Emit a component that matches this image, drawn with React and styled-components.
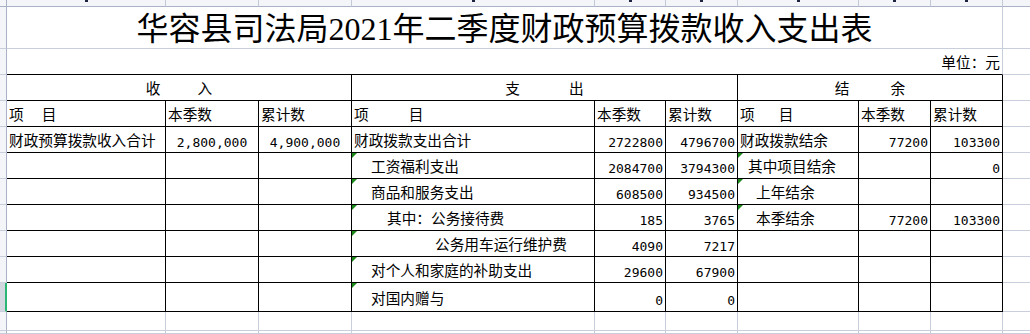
import React from 'react';
import styled, { createGlobalStyle } from 'styled-components';

const GRID = '#c8cedb';
const HEAD_LINE = '#aab2c6';
const HEAD_BG = '#f3f5f8';
const INK = '#000';

const GlobalStyle = createGlobalStyle`
  html, body { margin: 0; padding: 0; background: #fff; }
  body { font-family: "Noto Sans CJK SC", sans-serif; overflow: hidden; }
  * { box-sizing: border-box; }
`;

const Sheet = styled.div`
  display: grid;
  width: 1030px;
  height: 334px;
  overflow: hidden;
  grid-template-columns: 7px 159px 93px 93px 243px 71px 72px 121px 72px 72px 1fr;
  grid-template-rows: 7px 42px 26px 26px 26px repeat(6, 26px) 29px 19px 1fr;
  background: #fff;
`;

const Corner = styled.div`
  background: ${HEAD_BG};
  border-right: 1px solid ${HEAD_LINE};
  border-bottom: 1px solid ${HEAD_LINE};
`;

const ColHead = styled.div`
  background: ${HEAD_BG};
  border-right: ${p => (p.$last ? 'none' : `1px solid #c3c9d6`)};
  border-bottom: 1px solid ${HEAD_LINE};
  display: flex;
  justify-content: center;
  align-items: flex-start;
  overflow: hidden;
`;

const Tick = styled.span`
  display: block;
  width: 3px;
  height: 2px;
  background: #1c2440;
`;

const RowHead = styled.div`
  background: ${p => (p.$selected ? '#d3d7e0' : HEAD_BG)};
  border-right: ${p => (p.$selected ? '2px solid #2bb673' : `1px solid ${HEAD_LINE}`)};
  border-bottom: 1px solid ${GRID};
`;

const TitleCell = styled.div`
  grid-column: span 9;
  border-right: 1px solid ${GRID};
  border-bottom: 1px solid ${GRID};
  display: flex;
  align-items: center;
  justify-content: center;
  padding-top: 3px;
  font-family: "Liberation Serif", "Noto Sans CJK SC", serif;
  font-size: 32px;
  line-height: 1;
  color: ${INK};
  white-space: nowrap;
`;

const UnitCell = styled.div`
  grid-column: span 9;
  border-right: 1px solid ${GRID};
  border-bottom: 1px solid ${INK};
  display: flex;
  align-items: center;
  justify-content: flex-end;
  padding: 2px 2px 0 0;
  font-size: 14.67px;
  line-height: 1;
  color: ${INK};
`;

const Blank = styled.div`
  border-right: ${p => (p.$open ? 'none' : `1px solid ${GRID}`)};
  border-bottom: 1px solid ${GRID};
`;

const Cell = styled.div`
  position: relative;
  grid-column: span ${p => p.$span || 1};
  border-right: 1px solid ${INK};
  border-bottom: 1px solid ${INK};
  display: flex;
  align-items: center;
  justify-content: ${p =>
    p.$align === 'right' ? 'flex-end' : p.$align === 'center' ? 'center' : 'flex-start'};
  padding: ${p => (p.$num ? 6 : 2)}px 2px 0 ${p => 2 + (p.$indent || 0)}px;
  font-family: ${p =>
    p.$num ? '"DejaVu Sans Mono", monospace' : '"Noto Sans CJK SC", sans-serif'};
  font-size: ${p => (p.$num ? '13px' : '14.67px')};
  line-height: 1;
  color: ${INK};
  white-space: nowrap;
  overflow: hidden;
`;

const Flag = styled.span`
  position: absolute;
  top: 0;
  left: 0;
  width: 0;
  height: 0;
  border-top: 5px solid #1b8a1b;
  border-right: 5px solid transparent;
`;

const Spaced = styled.span`
  display: inline-flex;
  gap: ${p => p.$gap}px;
`;

const tickCols = [true, false, false, true, true, true, true, true, true];

const rows = [
  {
    inc: ['财政预算拨款收入合计', '2,800,000', '4,900,000'],
    exp: { name: '财政拨款支出合计', indent: 0, q: '2722800', t: '4796700' },
    bal: { name: '财政拨款结余', indent: 0, q: '77200', t: '103300' },
  },
  {
    exp: { name: '工资福利支出', indent: 17, q: '2084700', t: '3794300', flag: true },
    bal: { name: '其中项目结余', indent: 8, q: '', t: '0', flag: true },
  },
  {
    exp: { name: '商品和服务支出', indent: 17, q: '608500', t: '934500', flag: true },
    bal: { name: '上年结余', indent: 16, q: '', t: '', flag: true },
  },
  {
    exp: { name: '其中：公务接待费', indent: 33, q: '185', t: '3765', flag: true },
    bal: { name: '本季结余', indent: 16, q: '77200', t: '103300', flag: true },
  },
  {
    exp: { name: '公务用车运行维护费', indent: 81, q: '4090', t: '7217', flag: true },
  },
  {
    exp: { name: '对个人和家庭的补助支出', indent: 17, q: '29600', t: '67900', flag: true },
  },
  {
    exp: { name: '对国内赠与', indent: 17, q: '0', t: '0', flag: true },
  },
];

const Pair = ({ a, b, gap }) => (
  <Spaced $gap={gap}>
    <span>{a}</span>
    <span>{b}</span>
  </Spaced>
);

export default function App() {
  return (
    <>
      <GlobalStyle />
      <Sheet>
        <Corner />
        {tickCols.map((t, i) => (
          <ColHead key={i}>{t && <Tick />}</ColHead>
        ))}
        <ColHead $last />

        <RowHead />
        <TitleCell>华容县司法局2021年二季度财政预算拨款收入支出表</TitleCell>
        <Blank $open />

        <RowHead />
        <UnitCell>单位：元</UnitCell>
        <Blank $open />

        <RowHead />
        <Cell $span={3} $align="center">
          <Pair a="收" b="入" gap={37} />
        </Cell>
        <Cell $span={3} $align="center">
          <Pair a="支" b="出" gap={49} />
        </Cell>
        <Cell $span={3} $align="center">
          <Pair a="结" b="余" gap={41} />
        </Cell>
        <Blank $open />

        <RowHead />
        <Cell><Pair a="项" b="目" gap={18} /></Cell>
        <Cell>本季数</Cell>
        <Cell>累计数</Cell>
        <Cell><Pair a="项" b="目" gap={40} /></Cell>
        <Cell>本季数</Cell>
        <Cell>累计数</Cell>
        <Cell><Pair a="项" b="目" gap={24} /></Cell>
        <Cell>本季数</Cell>
        <Cell>累计数</Cell>
        <Blank $open />

        {rows.map((r, i) => (
          <React.Fragment key={i}>
            <RowHead $selected={i === rows.length - 1} />
            <Cell>{r.inc ? r.inc[0] : ''}</Cell>
            <Cell $num $align="center">{r.inc ? r.inc[1] : ''}</Cell>
            <Cell $num $align="center">{r.inc ? r.inc[2] : ''}</Cell>
            <Cell $indent={r.exp.indent}>
              {r.exp.flag && <Flag />}
              {r.exp.name}
            </Cell>
            <Cell $num $align="right">{r.exp.q}</Cell>
            <Cell $num $align="right">{r.exp.t}</Cell>
            <Cell $indent={r.bal ? r.bal.indent : 0}>
              {r.bal && r.bal.flag && <Flag />}
              {r.bal ? r.bal.name : ''}
            </Cell>
            <Cell $num $align="right">{r.bal ? r.bal.q : ''}</Cell>
            <Cell $num $align="right">{r.bal ? r.bal.t : ''}</Cell>
            <Blank $open />
          </React.Fragment>
        ))}

        {[0, 1].map(k => (
          <React.Fragment key={`tail${k}`}>
            <RowHead />
            {tickCols.map((_, i) => (
              <Blank key={i} />
            ))}
            <Blank $open />
          </React.Fragment>
        ))}
      </Sheet>
    </>
  );
}
